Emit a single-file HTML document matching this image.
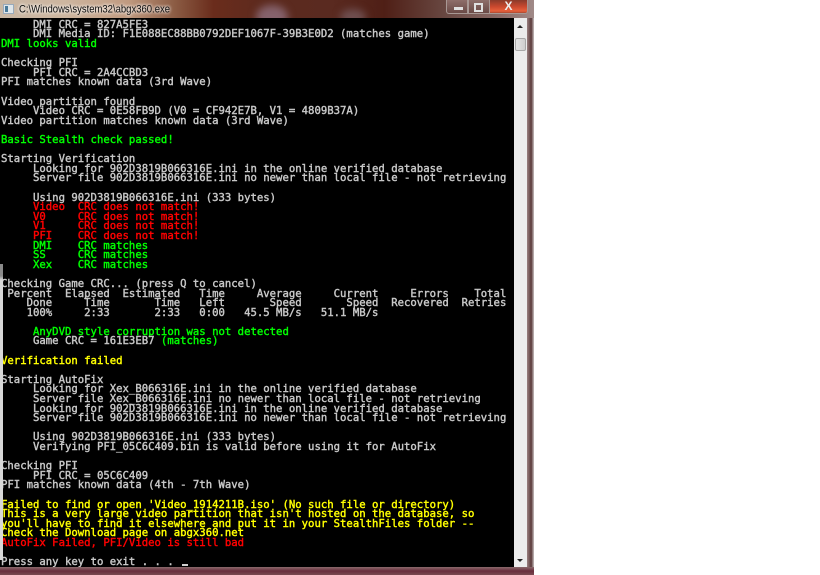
<!DOCTYPE html>
<html>
<head>
<meta charset="utf-8">
<style>
html,body{margin:0;padding:0;background:#fff;width:820px;height:575px;overflow:hidden}
#win{position:absolute;left:0;top:0;width:534px;height:575px;background:linear-gradient(90deg,#7a5a58 0,#6a4040 100%);overflow:hidden}
#title{position:absolute;left:0;top:0;width:534px;height:18px;overflow:hidden;background:linear-gradient(90deg,#c9b7a4 0,#cdb6a0 12%,#c09a80 24%,#8a5a42 33%,#6a2c1c 40%,#5c2a1e 50%,#5a2a20 62%,#4f1f16 72%,#6a4a44 84%,#8c6c68 94%,#a08a88 100%)}
#blob1{position:absolute;left:256px;top:5px;width:32px;height:24px;border-radius:50%;background:#85626c;filter:blur(4px)}
#blob2{position:absolute;left:340px;top:9px;width:26px;height:16px;border-radius:50%;background:#6f4f50;filter:blur(4px)}
#ttxt{position:absolute;left:19px;top:3px;font:9.5px/13px "Liberation Sans",sans-serif;color:#0c0c0c;white-space:pre;text-shadow:0 0 3px #fff,0 0 3px #fff;transform:scaleY(1.12);transform-origin:0 50%}
#ico{position:absolute;left:3px;top:4px;width:9px;height:8px;background:#dfe6ea;border:1px solid #9ab}
#ico:after{content:"";position:absolute;left:1px;top:1px;width:3px;height:6px;background:#4a7a9a}
#bmin{position:absolute;left:446px;top:0;width:22px;height:14px;background:linear-gradient(#8e6e6a,#6a4a46);border:1px solid #a89894;border-top:0;border-radius:0 0 0 3px;box-sizing:border-box}
#bmin:after{content:"";position:absolute;left:7px;top:7px;width:9px;height:3px;background:#e0e0e0}
#bmax{position:absolute;left:468px;top:0;width:21px;height:14px;background:linear-gradient(#8e6e6a,#6a4a46);border-bottom:1px solid #a89894;border-left:1px solid #a89894;box-sizing:border-box}
#bmax:after{content:"";position:absolute;left:5px;top:3px;width:5px;height:5px;border:2px solid #e0e0e0}
#bcl{position:absolute;left:489px;top:0;width:39px;height:14px;background:linear-gradient(#8a3a2a,#c8482e 50%,#e8603c 85%,#a84830);border:1px solid #a89894;border-top:0;border-radius:0 0 3px 0;box-sizing:border-box;color:#eeeeee;font:bold 12px/12px "Liberation Sans",sans-serif;text-align:center}
#con{position:absolute;left:0;top:18px;width:514px;height:549px;background:#000;overflow:hidden}
#strip{position:absolute;left:0;top:264px;width:3px;height:296px;background:linear-gradient(#8a8a8a 0,#8a8a8a 12px,#d8d8d8 16px,#d8d8d8 100%)}
#cur{position:absolute;left:182px;top:564px;width:6px;height:2px;background:#d0d0d0}
pre{position:absolute;left:1px;top:1.9px;margin:0;font:normal 10.63px/9.6px "DejaVu Sans Mono",monospace;color:#c8c8c8;white-space:pre;-webkit-text-stroke:.4px currentColor}
.g{color:#00ff00}.r{color:#ff0000}.y{color:#ffff00}
#sb{position:absolute;left:514px;top:18px;width:13px;height:549px;background:#ececec}
#th{position:absolute;left:1px;top:20px;width:11px;height:13px;background:linear-gradient(90deg,#e4e4e4,#cfcfcf);border:1px solid #a8a8a8;border-radius:2px;box-sizing:border-box}
#up{position:absolute;left:3px;top:7px;width:0;height:0;border:3px solid transparent;border-bottom:3px solid #222;border-top:0}
#dn{position:absolute;left:3px;top:541px;width:0;height:0;border:3px solid transparent;border-top:3px solid #222;border-bottom:0}
#bot{position:absolute;left:0;top:567px;width:534px;height:8px;background:linear-gradient(#8a6a6c,#6a2c3c 50%,#7a4a50)}
#rb{position:absolute;left:527px;top:18px;width:7px;height:557px;background:linear-gradient(90deg,#9a8080,#5a3a3a 60%,#c8c0c0)}
</style>
</head>
<body>
<div id="win">
<div id="title"><div id="blob1"></div><div id="blob2"></div></div>
<div id="ico"></div>
<div id="ttxt">C:\Windows\system32\abgx360.exe</div>
<div id="bmin"></div><div id="bmax"></div><div id="bcl">X</div>
<div id="rb"></div>
<div id="con"><pre>     DMI CRC = 827A5FE3
     DMI Media ID: F1E088EC88BB0792DEF1067F-39B3E0D2 (matches game)
<span class="g">DMI looks valid</span>

Checking PFI
     PFI CRC = 2A4CCBD3
PFI matches known data (3rd Wave)

Video partition found
     Video CRC = 0E58FB9D (V0 = CF942E7B, V1 = 4809B37A)
Video partition matches known data (3rd Wave)

<span class="g">Basic Stealth check passed!</span>

Starting Verification
     Looking for 902D3819B066316E.ini in the online verified database
     Server file 902D3819B066316E.ini no newer than local file - not retrieving

     Using 902D3819B066316E.ini (333 bytes)
     <span class="r">Video  CRC does not match!</span>
     <span class="r">V0     CRC does not match!</span>
     <span class="r">V1     CRC does not match!</span>
     <span class="r">PFI    CRC does not match!</span>
     <span class="g">DMI    CRC matches</span>
     <span class="g">SS     CRC matches</span>
     <span class="g">Xex    CRC matches</span>

Checking Game CRC... (press Q to cancel)
 Percent  Elapsed  Estimated   Time     Average     Current     Errors    Total
    Done     Time       Time   Left       Speed       Speed  Recovered  Retries
    100%     2:33       2:33   0:00   45.5 MB/s   51.1 MB/s

     <span class="g">AnyDVD style corruption was not detected</span>
     Game CRC = 161E3EB7 <span class="g">(matches)</span>

<span class="y">Verification failed</span>

Starting AutoFix
     Looking for Xex_B066316E.ini in the online verified database
     Server file Xex_B066316E.ini no newer than local file - not retrieving
     Looking for 902D3819B066316E.ini in the online verified database
     Server file 902D3819B066316E.ini no newer than local file - not retrieving

     Using 902D3819B066316E.ini (333 bytes)
     Verifying PFI_05C6C409.bin is valid before using it for AutoFix

Checking PFI
     PFI CRC = 05C6C409
PFI matches known data (4th - 7th Wave)

<span class="y">Failed to find or open 'Video_1914211B.iso' (No such file or directory)
This is a very large video partition that isn't hosted on the database, so
you'll have to find it elsewhere and put it in your StealthFiles folder --
Check the Download page on abgx360.net</span>
<span class="r">AutoFix Failed, PFI/Video is still bad</span>

Press any key to exit . . .</pre></div>
<div id="strip"></div>
<div id="cur"></div>
<div id="sb"><div id="up"></div><div id="th"></div><div id="dn"></div></div>
<div id="bot"></div>
</div>
</body>
</html>
